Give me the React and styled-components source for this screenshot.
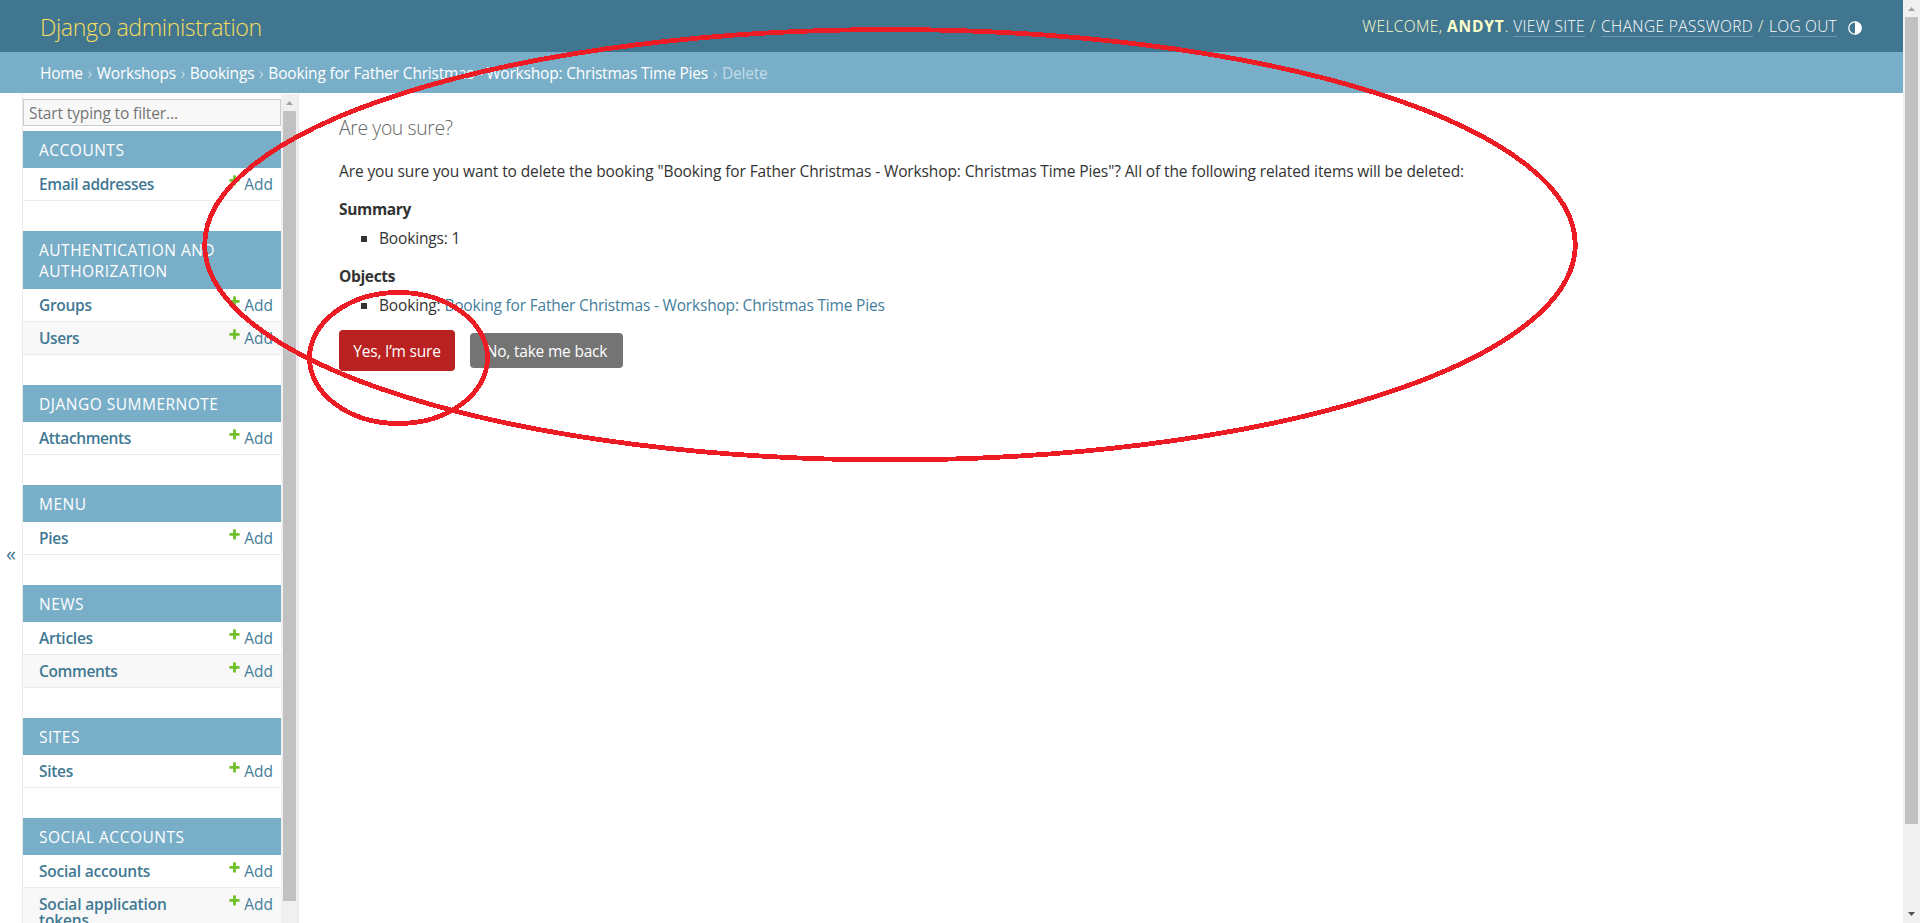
import React from 'react';
import styled, { createGlobalStyle } from 'styled-components';

const GlobalStyle = createGlobalStyle`
  *, *::before, *::after { box-sizing: border-box; }
  body {
    margin: 0;
    background: #fff;
    color: #333;
    font: 400 15.5px/20px "Open Sans", "Noto Sans", sans-serif;
    overflow: hidden;
  }
  a { color: inherit; text-decoration: none; }
`;

const Window = styled.div`
  position: relative;
  display: flex;
  width: 1920px;
  height: 923px;
  overflow: hidden;
`;

const Page = styled.div`
  display: flex;
  flex-direction: column;
  flex: 1;
  min-width: 0;
`;

const Header = styled.header`
  display: flex;
  align-items: flex-start;
  justify-content: space-between;
  flex: none;
  height: 52px;
  padding: 0 40px;
  background: #417690;
  color: #ffc;
`;

const SiteName = styled.h1`
  margin: 10px 0 0;
  color: #f5dd5d;
  font-size: 23.2px;
  font-weight: 300;
  line-height: 35px;
  letter-spacing: -0.4px;
`;

const UserTools = styled.div`
  display: flex;
  align-items: flex-start;
  margin-top: 16px;
  font-weight: 300;
  line-height: 20px;
  text-transform: uppercase;
  white-space: pre;
  letter-spacing: 0.4px;

  strong { font-weight: 700; letter-spacing: 0.85px; }
`;

const ToolLink = styled.a`
  height: 21px;
  border-bottom: 1px solid rgba(255, 255, 255, 0.25);
  color: #fff;
  letter-spacing: ${(p) => p.$tracking}px;
`;

const Slash = styled.span`
  width: 16px;
  padding-right: 1px;
  text-align: center;
  letter-spacing: 0;
`;

const ThemeIcon = styled.svg`
  width: 14px;
  height: 14px;
  margin: 5px 1px 0 11px;
`;

const Breadcrumbs = styled.nav`
  flex: none;
  height: 41px;
  padding: 11px 40px 10px;
  background: #79aec8;
  color: #c4dce8;
  white-space: pre;
`;

const Crumb = styled.a`
  color: #fff;
  letter-spacing: ${(p) => p.$tracking ?? -0.25}px;
`;

const CurrentCrumb = styled.span`
  letter-spacing: -0.2px;
`;

const Separator = styled.span`
  display: inline-block;
  width: 14px;
  text-align: center;
`;

const Main = styled.div`
  display: flex;
  flex: 1;
  min-height: 0;
`;

const SidebarToggle = styled.button`
  flex: none;
  width: 23px;
  padding: 92px 0 0;
  border: 0;
  border-right: 1px solid #eaeaea;
  background: #fff;
  color: #417690;
  font: 400 20px/20px "Open Sans", sans-serif;
`;

const Sidebar = styled.aside`
  display: flex;
  flex: none;
  width: 276px;
  border-right: 1px solid #eaeaea;
  overflow: hidden;
`;

const SidebarList = styled.div`
  width: 258px;
  padding-top: 6px;
`;

const Filter = styled.input`
  display: block;
  width: 258px;
  height: 27px;
  margin-bottom: 5px;
  padding: 1px 5px 0;
  border: 1px solid #ccc;
  border-radius: 0;
  background: #f8f8f8;
  font: 400 15.5px/20px "Open Sans", sans-serif;
  letter-spacing: -0.12px;
  &::placeholder { color: #757575; opacity: 1; }
`;

const Module = styled.section`
  margin-bottom: 30px;
`;

const Caption = styled.h2`
  margin: 0;
  padding: 9px 16px 7px;
  background: #79aec8;
  color: #fff;
  font-size: 15.5px;
  font-weight: 400;
  line-height: 21px;
  letter-spacing: 0.5px;
  text-transform: uppercase;
`;

const ModelRow = styled.div`
  display: flex;
  align-items: flex-start;
  justify-content: space-between;
  padding: 8px 8px 8px 16px;
  border-bottom: 1px solid #eaeaea;
  background: ${(p) => (p.$shaded ? '#f8f8f8' : '#fff')};
  color: #447e9b;
  line-height: 16px;
`;

const ModelLink = styled.a`
  max-width: 150px;
  color: #417893;
  font-weight: 600;
  letter-spacing: ${(p) => p.$tracking}px;
`;

const AddLink = styled.a`
  display: flex;
  align-items: flex-start;
  gap: 3px;
`;

const PlusIcon = styled.svg`
  width: 13px;
  height: 13px;
  margin-top: -2px;
`;

const Content = styled.main`
  flex: 1;
  padding: 22px 40px;
`;

const Title = styled.h1`
  margin: 0 0 18px;
  color: #666;
  font-size: 19.4px;
  font-weight: 300;
  line-height: 26px;
  letter-spacing: -0.38px;
`;

const Question = styled.p`
  margin: 0;
  padding-top: 2px;
  line-height: 20px;
  letter-spacing: -0.117px;
  white-space: nowrap;
`;

const SectionTitle = styled.h2`
  margin: 18px 0 9px;
  font-size: 15.5px;
  font-weight: 700;
  line-height: 20px;
  letter-spacing: -0.35px;
`;

const BulletList = styled.ul`
  margin: 0;
  padding: 0;
  list-style: none;
`;

const BulletItem = styled.li`
  display: flex;
  align-items: center;
  padding-left: 22px;
  line-height: 20px;
  white-space: pre;
  letter-spacing: -0.15px;

  &::before {
    content: "";
    width: 6px;
    height: 6px;
    margin: 1px 12px 0 0;
    background: #333;
  }
`;

const ObjectLink = styled.a`
  color: #447e9b;
  letter-spacing: -0.19px;
`;

const Actions = styled.div`
  display: flex;
  align-items: center;
  gap: 15px;
  margin-top: 15px;
`;

const ActionButton = styled.button`
  width: ${(p) => p.$width}px;
  height: ${(p) => p.$height}px;
  padding: 0;
  border: 0;
  border-radius: 4px;
  background: ${(p) => p.$color};
  color: #fff;
  font: 400 15.5px/20px "Open Sans", sans-serif;
  letter-spacing: -0.2px;
`;

const Track = styled.div`
  display: flex;
  flex-direction: column;
  align-items: center;
  flex: none;
  width: 17px;
  margin-top: ${(p) => p.$offset || 0}px;
  background: #f0f0f0;
`;

const Arrow = styled.svg`
  flex: none;
  width: 17px;
  height: 17px;
`;

const Thumb = styled.div`
  width: 13px;
  height: ${(p) => p.$length}px;
  margin-bottom: auto;
  background: #c1c1c1;
`;

const Annotations = styled.svg`
  position: absolute;
  inset: 0;
  width: 1920px;
  height: 923px;
  pointer-events: none;
`;

const apps = [
  { name: 'Accounts', models: [['Email addresses', -0.38]] },
  { name: 'Authentication and Authorization', models: [['Groups', -0.3], ['Users', -0.4]] },
  { name: 'Django Summernote', models: [['Attachments', -0.4]] },
  { name: 'Menu', models: [['Pies', -0.3]] },
  { name: 'News', models: [['Articles', -0.25], ['Comments', -0.35]] },
  { name: 'Sites', models: [['Sites', -0.3]] },
  { name: 'Social Accounts', models: [['Social accounts', -0.23], ['Social application tokens', -0.17]] },
];

function Scrollbar({ length, offset, hasEnd }) {
  return (
    <Track $offset={offset}>
      <Arrow viewBox="0 0 17 17"><path d="M5 11 8.5 7 12 11z" fill="#a3a3a3" /></Arrow>
      <Thumb $length={length} />
      {hasEnd && <Arrow viewBox="0 0 17 17"><path d="M5 6h7L8.5 10z" fill="#505050" /></Arrow>}
    </Track>
  );
}

function Add() {
  return (
    <AddLink href="#">
      <PlusIcon viewBox="0 0 1792 1792">
        <path
          fill="#70bf2b"
          d="M1600 796v192q0 40-28 68t-68 28h-416v416q0 40-28 68t-68 28h-192q-40 0-68-28t-28-68v-416h-416q-40 0-68-28t-28-68v-192q0-40 28-68t68-28h416v-416q0-40 28-68t68-28h192q40 0 68 28t28 68v416h416q40 0 68 28t28 68z"
        />
      </PlusIcon>
      Add
    </AddLink>
  );
}

export default function App() {
  return (
    <Window>
      <GlobalStyle />
      <Page>
        <Header>
          <SiteName>Django administration</SiteName>
          <UserTools>
            <span>Welcome, <strong>andyt</strong>. </span>
            <ToolLink href="#" $tracking={0.4}>View site</ToolLink>
            <Slash>/</Slash>
            <ToolLink href="#" $tracking={0.39}>Change password</ToolLink>
            <Slash>/</Slash>
            <ToolLink href="#" $tracking={0.25}>Log out</ToolLink>
            <ThemeIcon viewBox="0 0 14 14">
              <circle cx="7" cy="7" r="6.2" fill="none" stroke="#fff" strokeWidth="1.3" />
              <path d="M7 0.5a6.5 6.5 0 0 1 0 13z" fill="#fff" />
            </ThemeIcon>
          </UserTools>
        </Header>
        <Breadcrumbs>
          <Crumb href="#">Home</Crumb><Separator>›</Separator>
          <Crumb href="#">Workshops</Crumb><Separator>›</Separator>
          <Crumb href="#" $tracking={-0.18}>Bookings</Crumb><Separator>›</Separator>
          <Crumb href="#" $tracking={-0.2}>Booking for Father Christmas - Workshop: Christmas Time Pies</Crumb>
          <Separator>›</Separator>
          <CurrentCrumb>Delete</CurrentCrumb>
        </Breadcrumbs>
        <Main>
          <SidebarToggle>«</SidebarToggle>
          <Sidebar>
            <SidebarList>
              <Filter placeholder="Start typing to filter..." />
              {apps.map((app) => (
                <Module key={app.name}>
                  <Caption>{app.name}</Caption>
                  {app.models.map(([model, tracking], i) => (
                    <ModelRow key={model} $shaded={i % 2 === 1}>
                      <ModelLink href="#" $tracking={tracking}>{model}</ModelLink>
                      <Add />
                    </ModelRow>
                  ))}
                </Module>
              ))}
            </SidebarList>
            <Scrollbar length={790} offset={1} />
          </Sidebar>
          <Content>
            <Title>Are you sure?</Title>
            <Question>
              Are you sure you want to delete the booking "Booking for Father Christmas - Workshop: Christmas Time Pies"? All of the following related items will be deleted:
            </Question>
            <SectionTitle>Summary</SectionTitle>
            <BulletList>
              <BulletItem>Bookings: 1</BulletItem>
            </BulletList>
            <SectionTitle>Objects</SectionTitle>
            <BulletList>
              <BulletItem>
                <span>Booking: </span>
                <ObjectLink href="#">Booking for Father Christmas - Workshop: Christmas Time Pies</ObjectLink>
              </BulletItem>
            </BulletList>
            <Actions>
              <ActionButton $width={116} $height={41} $color="#ba2121">Yes, I’m sure</ActionButton>
              <ActionButton $width={153} $height={35} $color="#747474">No, take me back</ActionButton>
            </Actions>
          </Content>
        </Main>
      </Page>
      <Scrollbar length={807} hasEnd />
      <Annotations viewBox="0 0 1920 923" fill="none" stroke="#ed1c24" strokeWidth="4.8" shapeRendering="crispEdges">
        <ellipse cx="890" cy="244.7" rx="685.3" ry="215.2" />
        <ellipse cx="398.5" cy="358" rx="89" ry="65.5" />
      </Annotations>
    </Window>
  );
}
